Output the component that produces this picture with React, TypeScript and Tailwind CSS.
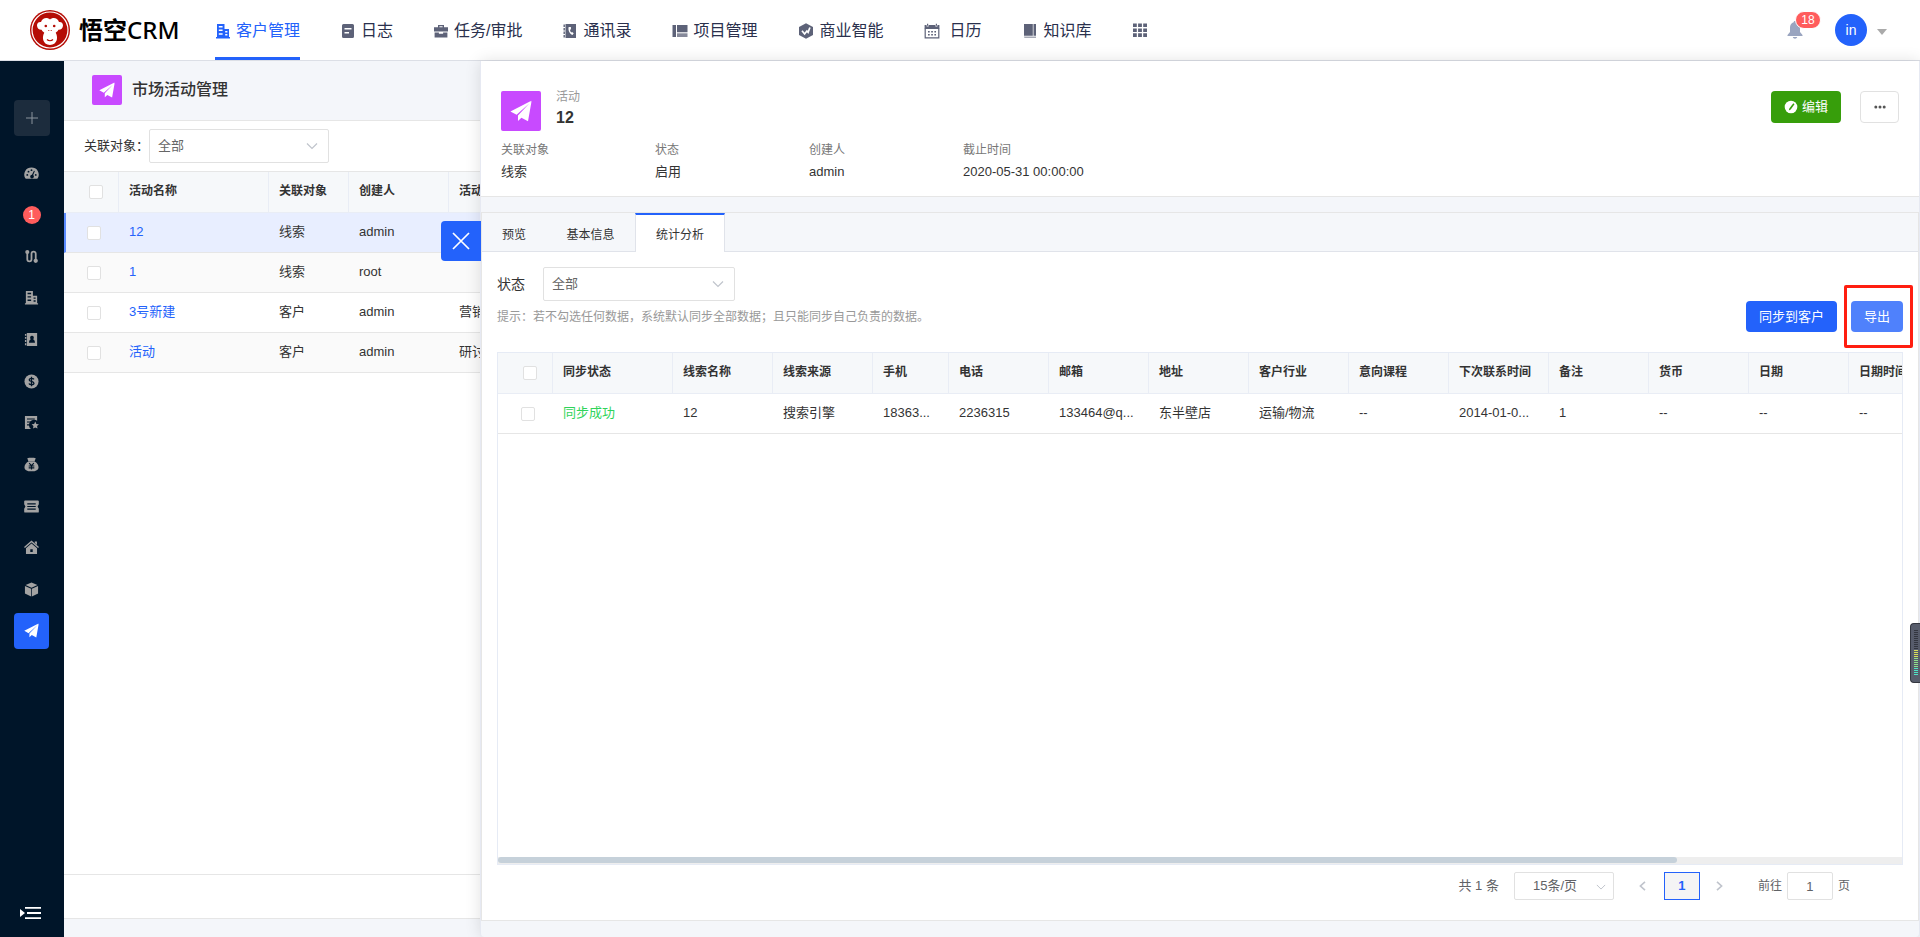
import React from 'react';

type IconProps = { className?: string };

const MonkeyLogo = () => (
  <svg viewBox="0 0 40 40" className="size-10 shrink-0" aria-hidden="true">
    <circle cx="20" cy="20" r="20" fill="#b50d06" />
    <circle cx="20" cy="20" r="18" fill="none" stroke="#fff" strokeWidth="1.2" />
    <path d="M20 9.6C17.6 7.2 12.4 7.5 11 12c-1.2-.2-4 .2-4 3.600 0 3 2.400 4.400 4.600 4.200.6 1.300 1.700 2.200 2.700 2.900-1.200 2-1.600 4.400-1.200 6.600.6 3.500 3.300 5.700 6.900 5.700s6.300-2.200 6.900-5.700c.4-2.200 0-4.600-1.200-6.600 1-.7 2.100-1.600 2.700-2.900 2.200.2 4.600-1.200 4.600-4.200 0-3.400-2.800-3.800-4-3.600-1.400-4.500-6.600-4.800-9-2.400z" fill="#fff" />
    <circle cx="15.800" cy="16" r="1.300" fill="#b50d06" />
    <circle cx="24.200" cy="16" r="1.300" fill="#b50d06" />
    <circle cx="18.800" cy="20.500" r=".6" fill="#b50d06" />
    <circle cx="21.200" cy="20.500" r=".6" fill="#b50d06" />
    <path d="M17 29.500c1.600 1.700 4.400 1.700 6 0" fill="none" stroke="#b50d06" strokeWidth="1.100" />
  </svg>
);

const Building = ({ className }: IconProps) => (
  <svg viewBox="0 0 16 16" fill="currentColor" className={className} aria-hidden="true">
    <path fillRule="evenodd" d="M2 1h7.500v5H14v8h1v1.500H1V14h1zm1.800 2v1.500h3.800V3zm0 3.600v1.500h3.800V6.600zm0 3.600v1.500h3.800v-1.500zM10.200 8v1.400h2.200V8zm0 3v1.400h2.200V11z" />
  </svg>
);
const Note = ({ className }: IconProps) => (
  <svg viewBox="0 0 16 16" fill="currentColor" className={className} aria-hidden="true">
    <path fillRule="evenodd" d="M3.500 1h9A1.500 1.500 0 0 1 14 2.500v11a1.500 1.500 0 0 1-1.500 1.500h-9A1.500 1.500 0 0 1 2 13.500v-11A1.500 1.500 0 0 1 3.500 1zM4.500 5v1.500h7V5zm0 4v1.500H9V9z" />
  </svg>
);
const Briefcase = ({ className }: IconProps) => (
  <svg viewBox="0 0 16 16" fill="currentColor" className={className} aria-hidden="true">
    <path fillRule="evenodd" d="M5 2h6v2.200h4v4.300H1V4.200h4zm1.400 1.300v.9h3.200v-.9zM1.600 9.500h4.300v1.300h4.200V9.500h4.300V14.500H1.600z" />
  </svg>
);
const PhoneBook = ({ className }: IconProps) => (
  <svg viewBox="0 0 16 16" fill="currentColor" className={className} aria-hidden="true">
    <path fillRule="evenodd" d="M3.500 1H14v14H3.500zM6.700 4c-1 2.500 1 7.300 3.800 8l1.200-1.800-1.600-1.200-.9.500c-.8-.8-1.200-1.700-1.200-2.800l1-.5-.1-2.200z" />
    <path d="M1.500 1.500h1.400v2.400H1.500zM1.500 5h1.400v2.400H1.500zM1.500 8.500h1.400v2.400H1.500zM1.500 12h1.400v2.400H1.500z" />
  </svg>
);
const Board = ({ className }: IconProps) => (
  <svg viewBox="0 0 16 16" fill="currentColor" className={className} aria-hidden="true">
    <path d="M.5 2h3.500v12H.5zM5 2h10.500v7.200H5z" />
    <path d="M5 10.300h10.500V14H5z" opacity=".75" />
  </svg>
);
const Hexagon = ({ className }: IconProps) => (
  <svg viewBox="0 0 16 16" fill="currentColor" className={className} aria-hidden="true">
    <path d="M8 .2l7 3.900v7.800l-7 3.900-7-3.900V4.100z" />
    <path d="M4 7.800l2.600 3.200 2.300-3 1.200 1.300 1.800-4.800" fill="none" stroke="#fff" strokeWidth="1.700" />
  </svg>
);
const CalendarGrid = ({ className }: IconProps) => (
  <svg viewBox="0 0 16 16" className={className} fill="currentColor" aria-hidden="true">
    <path d="M1.200 5.500h13.600v9.300H1.200z" fill="none" stroke="currentColor" strokeWidth="1.200" />
    <path d="M.6 2h2v1.500h2V2h6.800v1.500h2V2h2v3.500H.6zM3 .8h1.200v2H3zM11.800.8H13v2h-1.200z" />
    <path d="M4 8h1.700v1.600H4zM7.200 8h1.700v1.600H7.200zM10.400 8H12v1.600h-1.600zM4 11h1.700v1.600H4zM7.200 11h1.700v1.600H7.200zM10.400 11H12v1.600h-1.600z" />
  </svg>
);
const Book = ({ className }: IconProps) => (
  <svg viewBox="0 0 16 16" fill="currentColor" className={className} aria-hidden="true">
    <path d="M2 1h8.800v11.800H2zM11.500 1H14v11.800h-2.500z" />
    <path d="M2 13.400h12V15H3a1 1 0 0 1-1-1z" opacity=".55" />
  </svg>
);
const Dots9 = ({ className }: IconProps) => (
  <svg viewBox="0 0 16 16" fill="currentColor" className={className} aria-hidden="true">
    <path d="M1 1.500h3.800v3.600H1zM6.100 1.500h3.800v3.600H6.100zM11.200 1.500H15v3.600h-3.800zM1 6.400h3.800V10H1zM6.100 6.400h3.800V10H6.100zM11.200 6.400H15V10h-3.800zM1 11.300h3.800v3.600H1zM6.100 11.300h3.800v3.600H6.100zM11.200 11.300H15v3.600h-3.800z" />
  </svg>
);
const Plane = ({ className }: IconProps) => (
  <svg viewBox="0 0 16 16" fill="currentColor" className={className} aria-hidden="true">
    <path d="M15.500.5L.3 8.300l4.500 2.500L14.400 2.200zM15.700.8L5.800 11.200v4l2.500-2.300 4.800 2.500z" />
  </svg>
);
const Gauge = ({ className }: IconProps) => (
  <svg viewBox="0 0 16 16" className={className} aria-hidden="true">
    <path d="M8 1.500a7.700 7.700 0 0 0-6.800 11.400c.2.400.6.600 1 .6h11.600c.4 0 .8-.2 1-.6A7.700 7.700 0 0 0 8 1.500z" fill="currentColor" />
    <g fill="#001529"><circle cx="3.500" cy="9.500" r="1" /><circle cx="4.800" cy="6" r="1" /><circle cx="8" cy="4.400" r="1" /><circle cx="12.500" cy="9.500" r="1" /><path d="M10.600 5l1 .4-1.800 4.300a2 2 0 1 1-1.300-.4z" /></g>
  </svg>
);
const Route = ({ className }: IconProps) => (
  <svg viewBox="0 0 16 16" className={className} aria-hidden="true">
    <path d="M3.500 3v8a2.200 2.200 0 0 0 4.500 0V5a2.200 2.200 0 0 1 4.500 0v7" fill="none" stroke="currentColor" strokeWidth="1.900" />
    <circle cx="3.500" cy="3.200" r="2.200" fill="currentColor" /><circle cx="12.500" cy="12.600" r="2.300" fill="currentColor" />
  </svg>
);
const Contact = ({ className }: IconProps) => (
  <svg viewBox="0 0 16 16" fill="currentColor" className={className} aria-hidden="true">
    <path fillRule="evenodd" d="M3 1h11v14H3zm5.500 3a2 2 0 0 0-1.200 3.600C6 8.200 5.400 9.400 5.300 11.500h6.400c-.1-2.100-.7-3.300-2-3.900A2 2 0 0 0 8.500 4z" />
    <path d="M1 2h1.500v2H1zM1 5.300h1.500v2H1zM1 8.600h1.500v2H1zM1 12h1.500v2H1z" />
  </svg>
);
const Dollar = ({ className }: IconProps) => (
  <svg viewBox="0 0 16 16" className={className} aria-hidden="true">
    <circle cx="8" cy="8" r="7.500" fill="currentColor" />
    <path d="M10.600 5.700C10 4.600 5.600 4 5.600 6.300c0 2 5 1.300 5 3.500 0 2.300-4.700 1.900-5.300.3M8 3v10" fill="none" stroke="#001529" strokeWidth="1.400" />
  </svg>
);
const Contract = ({ className }: IconProps) => (
  <svg viewBox="0 0 16 16" className={className} aria-hidden="true">
    <path fill="currentColor" d="M1 1h13v5.200A5 5 0 0 0 7.500 15H1z" />
    <path d="M3.200 4.300h8.300M3.200 7.400h4.600M3.200 10.500h2.700" stroke="#001529" strokeWidth="1.200" />
    <path fill="currentColor" d="M12 7l1.200 2.500 2.700.3-2 1.900.5 2.800L12 13.200l-2.400 1.300.5-2.800-2-1.900 2.700-.3z" />
  </svg>
);
const MoneyBag = ({ className }: IconProps) => (
  <svg viewBox="0 0 16 16" className={className} aria-hidden="true">
    <path fill="currentColor" d="M3.500 1.300l2-.5h5l2 .5L11.300 4.500H4.700zM4.700 4.800h6.600c2.500 1.300 4.200 3.500 4.200 6 0 2.800-2.500 4.500-7.500 4.500S.5 13.600.5 10.800c0-2.500 1.700-4.700 4.200-6z" />
    <path d="M5.500 6.500L8 9.300l2.500-2.800M8 9.300v4M5 9.600h6M5 11.600h6" fill="none" stroke="#001529" strokeWidth="1.200" />
  </svg>
);
const Ticket = ({ className }: IconProps) => (
  <svg viewBox="0 0 16 16" className={className} aria-hidden="true">
    <path fill="currentColor" d="M1.200 1.500h13.600a1 1 0 0 1 1 1v3L14.500 8l1.300 2.500v3a1 1 0 0 1-1 1H1.200a1 1 0 0 1-1-1v-3L1.500 8 .2 5.500v-3a1 1 0 0 1 1-1z" />
    <path d="M3.500 5.200h9M3.500 8h9M3.500 10.800h9" stroke="#001529" strokeWidth="1.100" />
  </svg>
);
const House = ({ className }: IconProps) => (
  <svg viewBox="0 0 16 16" className={className} fill="currentColor" aria-hidden="true">
    <path d="M.5 8L8 1.500 15.500 8" fill="none" stroke="currentColor" strokeWidth="1.500" />
    <path d="M11.500 1.500h2.300v3.800l-2.300-2z" />
    <path fillRule="evenodd" d="M8 3.600l5.900 5.200V15H2.100V8.800zM6.700 9.800v3h2.600v-3z" />
  </svg>
);
const Cube = ({ className }: IconProps) => (
  <svg viewBox="0 0 16 16" fill="currentColor" className={className} aria-hidden="true">
    <path d="M8 .5l6.300 2.700L8 6.200 1.700 3.200zM1 4.200l6.600 3v8.300L1 12.300zM15 4.200l-6.600 3v8.300l6.600-3.200z" />
  </svg>
);
const Fold = () => (
  <svg viewBox="0 0 22 14" fill="currentColor" className="h-3.5 w-[22px]" aria-hidden="true">
    <path d="M0 3l5 4-5 4zM5 1h16v1.800H5zM7 6.100h14v1.800H7zM5 11.200h16V13H5z" />
  </svg>
);
const Chevron = ({ className }: IconProps) => (
  <svg viewBox="0 0 12 12" fill="none" stroke="#c0c4cc" strokeWidth="1.200" className={className} aria-hidden="true">
    <path d="M1 3.500L6 8.500l5-5" />
  </svg>
);

const navItems = [
  { label: '客户管理', Icon: Building, gap: 'mr-[5px]', active: true },
  { label: '日志', Icon: Note, gap: 'mr-[5px]' },
  { label: '任务/审批', Icon: Briefcase, gap: 'mr-[5px]' },
  { label: '通讯录', Icon: PhoneBook, gap: 'mr-[5px]' },
  { label: '项目管理', Icon: Board, gap: 'mr-1.5' },
  { label: '商业智能', Icon: Hexagon, gap: 'mr-1.5' },
  { label: '日历', Icon: CalendarGrid, gap: 'mr-2.5' },
  { label: '知识库', Icon: Book, gap: 'mr-1.5' },
];

const sideItems = [
  { name: '仪表盘', Icon: Gauge },
  { name: '待办事项', badge: '1' },
  { name: '线索', Icon: Route },
  { name: '客户', Icon: Building },
  { name: '联系人', Icon: Contact },
  { name: '商机', Icon: Dollar },
  { name: '合同', Icon: Contract },
  { name: '回款', Icon: MoneyBag },
  { name: '发票', Icon: Ticket },
  { name: '公海', Icon: House },
  { name: '产品', Icon: Cube },
  { name: '市场活动', Icon: Plane, active: true },
];

const activities = [
  { name: '12', target: '线索', creator: 'admin', kind: '' },
  { name: '1', target: '线索', creator: 'root', kind: '' },
  { name: '3号新建', target: '客户', creator: 'admin', kind: '营销' },
  { name: '活动', target: '客户', creator: 'admin', kind: '研讨' },
];

const fields = [
  ['关联对象', '线索'],
  ['状态', '启用'],
  ['创建人', 'admin'],
  ['截止时间', '2020-05-31 00:00:00'],
];

const columns = [
  ['同步状态', '同步成功', 'w-[120px]'],
  ['线索名称', '12', 'w-[100px]'],
  ['线索来源', '搜索引擎', 'w-[100px]'],
  ['手机', '18363...', 'w-[76px]'],
  ['电话', '2236315', 'w-[100px]'],
  ['邮箱', '133464@q...', 'w-[100px]'],
  ['地址', '东半壁店', 'w-[100px]'],
  ['客户行业', '运输/物流', 'w-[100px]'],
  ['意向课程', '--', 'w-[100px]'],
  ['下次联系时间', '2014-01-0...', 'w-[100px]'],
  ['备注', '1', 'w-[100px]'],
  ['货币', '--', 'w-[100px]'],
  ['日期', '--', 'w-[100px]'],
  ['日期时间', '--', 'w-[100px]'],
];

const Check = ({ label }: { label: string }) => (
  <input
    type="checkbox"
    aria-label={label}
    className="block size-3.5 appearance-none rounded-xs border border-[#e1e1e1] bg-white checked:bg-[#2362fb]"
  />
);

const headCell = 'border-r border-b border-[#e9edf5] px-2.5 pb-0.5 text-left font-bold whitespace-nowrap';
const bodyCell = 'truncate border-b border-[#e6e6e6] px-2.5 pb-0.5 text-left';

function TopBar() {
  return (
    <header className="flex h-[61px] shrink-0 items-stretch border-b border-[#dcdfe6] bg-white pl-[30px] text-base text-[#2a304d]">
      <a href="#home" className="flex w-[185px] items-center gap-[9px] text-black">
        <MonkeyLogo />
        <span className="flex items-center font-['Noto_Sans','Noto_Sans_CJK_SC',sans-serif] text-2xl leading-none font-medium whitespace-nowrap">
          <b className="font-bold">悟空</b>CRM
        </span>
      </a>
      <nav className="flex gap-10">
        {navItems.map(({ label, Icon, active, gap }) => (
          <a
            key={label}
            href="#nav"
            className={`flex items-center border-b-3 pt-[5px] whitespace-nowrap ${active ? 'border-[#2362fb] text-[#2362fb]' : 'border-transparent'}`}
          >
            <Icon className={`size-4 ${gap} ${active ? '' : 'text-[#5d6278]'}`} />
            {label}
          </a>
        ))}
        <button type="button" aria-label="更多应用" className="text-[#5d6278]">
          <Dots9 className="size-4" />
        </button>
      </nav>
      <div className="ml-auto flex items-center pr-[33px]">
        <button type="button" aria-label="消息" className="relative mr-8 text-[#9aa5c0]">
          <svg viewBox="0 0 16 18" fill="currentColor" className="h-[18px] w-4" aria-hidden="true">
            <path d="M8 0c.8 0 1.300.5 1.300 1.200C11.800 1.800 13 4 13 6.500v4.500l2.500 3v1H.5v-1L3 11V6.500C3 4 4.200 1.800 6.700 1.200 6.700.5 7.200 0 8 0zM5.800 16h4.400c-.3 1-1.200 1.700-2.200 1.700S6.100 17 5.800 16z" />
          </svg>
          <span className="absolute -top-2.5 left-2 flex h-[18px] w-[26px] items-center justify-center rounded-full border border-white bg-[#ff5c5c] text-xs text-white">18</span>
        </button>
        <span className="flex size-8 items-center justify-center rounded-full bg-[#2362fb] text-sm text-white">in</span>
        <button type="button" aria-label="账户菜单" className="ml-2.5 pt-1 text-[#aaaaaa]">
          <svg viewBox="0 0 10 6" fill="currentColor" className="h-1.5 w-2.5" aria-hidden="true"><path d="M0 0h10L5 6z" /></svg>
        </button>
      </div>
    </header>
  );
}

function Sidebar() {
  return (
    <aside className="flex w-16 shrink-0 flex-col bg-[#001529] text-[#a3a3a3]">
      <button type="button" aria-label="新建" className="mt-[39px] ml-3.5 flex size-9 items-center justify-center rounded-sm bg-[#1c2c3d]">
        <svg viewBox="0 0 12 12" className="size-3" fill="none" stroke="#8a939d" aria-hidden="true"><path d="M6 0v12M0 6h12" /></svg>
      </button>
      <ul className="mt-[19px] ml-3.5 flex h-[494px] flex-col justify-between">
        {sideItems.map(({ name, Icon, badge, active }) => (
          <li key={name}>
            <a
              href="#module"
              aria-label={name}
              className={`flex h-9 w-[35px] items-center justify-center rounded-sm ${active ? 'bg-[#2362fb] text-white' : ''}`}
            >
              {badge ? (
                <span className="flex size-[18px] items-center justify-center rounded-full bg-[#ff5c5c] text-xs text-white">{badge}</span>
              ) : (
                Icon && <Icon className="size-[15px]" />
              )}
            </a>
          </li>
        ))}
      </ul>
      <button type="button" aria-label="展开菜单" className="mt-auto mb-[17px] ml-5 self-start text-white">
        <Fold />
      </button>
    </aside>
  );
}

function ActivityList() {
  return (
    <section className="flex min-w-0 flex-1 flex-col overflow-hidden bg-[#f4f6fa]">
      <div className="flex h-[60px] shrink-0 items-center gap-2.5 border-b border-[#e6e6e6] pb-0.5 pl-7 whitespace-nowrap">
        <span className="flex size-[30px] items-center justify-center rounded-xs bg-[#c84aff] text-white"><Plane className="size-4" /></span>
        <h1 className="text-base leading-5 font-medium text-[#333]">市场活动管理</h1>
      </div>
      <div className="flex h-[51px] shrink-0 items-center border-b border-[#e6e6e6] bg-white pl-5 text-[13px] whitespace-nowrap">
        <label htmlFor="target" className="w-[65px]">关联对象：</label>
        <div className="relative">
          <select id="target" className="h-[34px] w-[180px] appearance-none rounded-xs border border-[#e1e1e1] bg-white px-2 text-[13px] text-[#666]">
            <option>全部</option>
          </select>
          <Chevron className="pointer-events-none absolute top-[11px] right-[11px] size-3" />
        </div>
      </div>
      <div className="flex-1 overflow-hidden bg-white">
        <table className="w-[504px] table-fixed border-separate border-spacing-0 text-[13px]">
          <thead>
            <tr className="h-[41px] bg-[#f6f8fa] text-xs">
              <th className="w-[55px] border-r border-b border-[#e9edf5] pl-[25px]"><Check label="全选活动" /></th>
              <th className={`${headCell} w-[150px]`}>活动名称</th>
              <th className={`${headCell} w-20`}>关联对象</th>
              <th className={`${headCell} w-[100px]`}>创建人</th>
              <th className={headCell}>活动类型</th>
            </tr>
          </thead>
          <tbody>
            {activities.map((a, i) => (
              <tr key={a.name} className={`h-10 ${i === 0 ? 'bg-[#e8eeff]' : i % 2 ? 'bg-[#fafafa]' : 'bg-white'}`}>
                <td className={`border-b border-[#e6e6e6] ${i === 0 ? 'border-l-2 border-l-[#5a8bff] pl-[21px]' : 'pl-[23px]'}`}><Check label={`选择${a.name}`} /></td>
                <td className={bodyCell}><a href="#activity" className="text-[#2362fb]">{a.name}</a></td>
                <td className={bodyCell}>{a.target}</td>
                <td className={bodyCell}>{a.creator}</td>
                <td className={bodyCell}>{a.kind}</td>
              </tr>
            ))}
          </tbody>
        </table>
      </div>
      <div className="mb-[18px] h-[45px] shrink-0 border-y border-[#e6e6e6] bg-white" />
    </section>
  );
}

function LeadsTable() {
  return (
    <div className="mx-[15px] flex min-h-0 flex-1 flex-col border border-[#e6ebf5]">
      <div className="flex-1 overflow-hidden">
        <table className="w-[1451px] table-fixed border-separate border-spacing-0 text-[13px]">
          <thead>
            <tr className="h-[41px] bg-[#f6f8fa] text-xs">
              <th className="w-[55px] border-r border-b border-[#e9edf5] pl-[25px]"><Check label="全选线索" /></th>
              {columns.map(([title, , width]) => (
                <th key={title} className={`${headCell} ${width}`}>{title}</th>
              ))}
            </tr>
          </thead>
          <tbody>
            <tr className="h-10">
              <td className="border-b border-[#e6e6e6] pl-[23px]"><Check label="选择线索12" /></td>
              {columns.map(([title, value], i) => (
                <td key={title} className={`${bodyCell} ${i === 0 ? 'text-[#2fd45a]' : ''}`}>{value}</td>
              ))}
            </tr>
          </tbody>
        </table>
      </div>
      <div className="h-[7px] bg-[#eeeeee]">
        <div className="h-1.5 w-[84%] rounded-full bg-[#c6d1da]" />
      </div>
    </div>
  );
}

function Pagination() {
  return (
    <div className="flex h-[55px] shrink-0 items-start pt-[7px] pr-[68px] text-[13px] text-[#606266]">
      <div className="ml-auto flex h-7 items-center whitespace-nowrap">
        <span className="mr-[15px]">共 1 条</span>
        <div className="relative mr-5">
          <select aria-label="每页条数" className="h-7 w-[100px] appearance-none rounded-xs border border-[#e1e1e1] bg-white pl-[18px] text-[13px]">
            <option>15条/页</option>
          </select>
          <Chevron className="pointer-events-none absolute top-2.5 right-2 size-2.5" />
        </div>
        <button type="button" aria-label="上一页" className="flex w-[30px] justify-center pr-3">
          <svg viewBox="0 0 8 12" className="h-2.5 w-[7px]" fill="none" stroke="#c0c4cc" strokeWidth="2" aria-hidden="true"><path d="M7 1L1.500 6 7 11" /></svg>
        </button>
        <button type="button" className="h-7 w-9 border border-[#2362fb] bg-[#f4f4f5] font-bold text-[#2362fb]">1</button>
        <button type="button" aria-label="下一页" className="flex w-10 justify-center">
          <svg viewBox="0 0 8 12" className="h-2.5 w-[7px]" fill="none" stroke="#c0c4cc" strokeWidth="2" aria-hidden="true"><path d="M1 1l5.500 5L1 11" /></svg>
        </button>
        <label className="ml-[18px] flex items-center text-xs">
          前往
          <input defaultValue="1" className="mx-[5px] h-7 w-[46px] rounded-xs border border-[#e1e1e1] text-center text-[13px]" />
          页
        </label>
      </div>
    </div>
  );
}

function Drawer() {
  return (
    <section className="relative z-10 flex w-3/4 shrink-0 flex-col rounded-b-sm border-x border-[#e6e9f2] bg-[#f4f6fa] shadow-[0_0_16px_rgba(0,0,0,0.12)]">
      <button type="button" aria-label="关闭" className="absolute top-40 right-full flex size-10 items-center justify-center rounded-l-sm bg-[#2362fb]">
        <svg viewBox="0 0 18 18" className="size-[18px]" fill="none" stroke="#fff" strokeWidth="1.700" aria-hidden="true"><path d="M1 1l16 16M17 1L1 17" /></svg>
      </button>

      <div className="flex h-[136px] shrink-0 flex-col border-b border-[#e6e6e6] bg-white pt-[30px] pr-5 pl-5">
        <div className="flex items-start">
          <span className="flex size-10 items-center justify-center rounded-xs bg-[#c84aff] text-white"><Plane className="size-[22px]" /></span>
          <div className="ml-[15px] flex flex-col">
            <span className="-mt-0.5 text-xs leading-4 text-[#999]">活动</span>
            <h2 className="mt-[3px] text-base leading-5 font-bold">12</h2>
          </div>
          <button type="button" className="ml-auto flex h-8 w-[70px] items-center justify-center gap-1 rounded-sm bg-[#379e0b] text-[13px] text-white">
            <svg viewBox="0 0 14 14" className="size-3.5" aria-hidden="true">
              <circle cx="7" cy="7" r="6.300" fill="#fff" />
              <path d="M9.300 3.300l1.200 1-3.800 5.300-1.900.9.500-2.100z" fill="#379e0b" />
            </svg>
            编辑
          </button>
          <button type="button" aria-label="更多操作" className="ml-[19px] flex h-8 w-[39px] items-center justify-center rounded-sm border border-[#e1e1e1] bg-white text-[#555]">
            <svg viewBox="0 0 12 4" fill="currentColor" className="h-1 w-3" aria-hidden="true"><circle cx="1.800" cy="2" r="1.500" /><circle cx="6" cy="2" r="1.500" /><circle cx="10.200" cy="2" r="1.500" /></svg>
          </button>
        </div>
        <dl className="mt-2 flex">
          {fields.map(([name, value]) => (
            <div key={name} className="w-[154px] whitespace-nowrap">
              <dt className="text-xs leading-[22px] text-[#777]">{name}</dt>
              <dd className="text-[13px] leading-[22px]">{value}</dd>
            </div>
          ))}
        </dl>
      </div>

      <div className="mt-[15px] mb-4 flex min-h-0 flex-1 flex-col border border-[#e6e6e6] bg-white">
        <div role="tablist" className="flex h-[39px] shrink-0 bg-[#f5f7fa] text-xs">
          <button type="button" role="tab" className="w-16 border-b border-[#e0e3ea] pt-1.5">预览</button>
          <button type="button" role="tab" className="w-[89px] border-b border-[#e0e3ea] pt-1.5">基本信息</button>
          <button type="button" role="tab" aria-selected="true" className="w-[90px] border-x border-t-2 border-[#e0e3ea] border-t-[#2362fb] bg-white pt-[3px]">统计分析</button>
          <div className="flex-1 border-b border-[#e0e3ea]" />
        </div>
        <div className="flex h-[49px] shrink-0 items-end px-[15px]">
          <label htmlFor="status" className="flex h-[34px] w-[46px] items-center text-sm">状态</label>
          <div className="relative">
            <select id="status" className="block h-[34px] w-48 appearance-none rounded-xs border border-[#e1e1e1] bg-white px-2 text-[13px] text-[#666]">
              <option>全部</option>
            </select>
            <Chevron className="pointer-events-none absolute top-[11px] right-[11px] size-3" />
          </div>
        </div>
        <div className="mb-5 flex h-[31px] shrink-0 items-center px-[15px] text-xs text-[#999]">
          <p>提示：若不勾选任何数据，系统默认同步全部数据；且只能同步自己负责的数据。</p>
          <button type="button" className="ml-auto h-[31px] w-[91px] rounded-sm bg-[#2362fb] text-[13px] text-white">同步到客户</button>
          <div className="relative ml-3.5">
            <button type="button" className="h-[31px] w-[52px] rounded-sm bg-[#4f81fc] text-[13px] text-white">导出</button>
            <span className="pointer-events-none absolute -inset-y-4 -right-2.5 -left-[7px] rounded-xs border-3 border-[#ff1e10]" />
          </div>
        </div>
        <LeadsTable />
        <Pagination />
      </div>
    </section>
  );
}

const meterBars = Array.from({ length: 23 }, (_, i) => i);

function SpeedMeter() {
  return (
    <div className="absolute top-[623px] right-0 z-20 flex h-[60px] w-2.5 items-center justify-end rounded-l-sm border border-r-0 border-[#33363f] bg-[#575c6b] pr-0.5">
      <svg viewBox="0 0 4 46" className="h-[46px] w-1" aria-hidden="true">
        {meterBars.map((i) => (
          <rect key={i} x="0" y={i * 2} width="4" height="1" fill={i < 10 ? '#33363f' : i < 14 ? '#d8e05a' : i < 19 ? '#8fe08a' : '#4fe3c4'} />
        ))}
      </svg>
    </div>
  );
}

export default function App() {
  return (
    <div className="relative flex h-screen flex-col overflow-hidden bg-[#f4f6fa] font-['Liberation_Sans','Noto_Sans_CJK_SC',sans-serif] text-[#333]">
      <TopBar />
      <main className="flex min-h-0 flex-1">
        <Sidebar />
        <ActivityList />
        <Drawer />
      </main>
      <SpeedMeter />
    </div>
  );
}
